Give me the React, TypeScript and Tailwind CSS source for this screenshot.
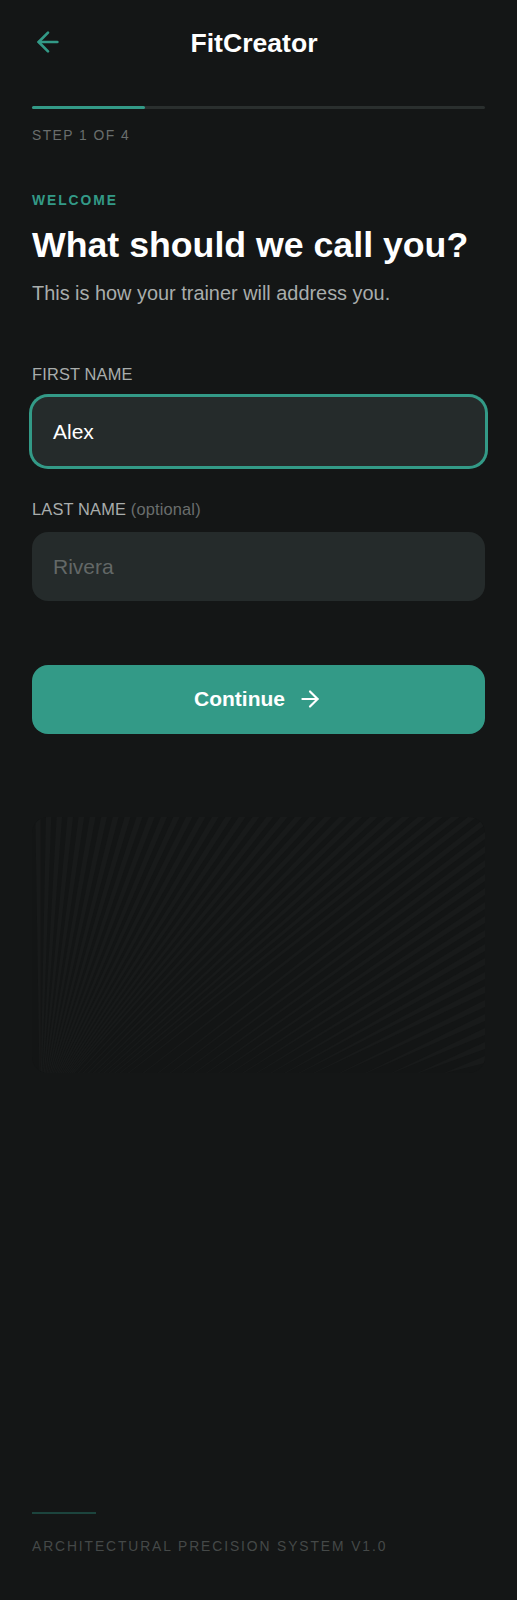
import { ArrowLeft, ArrowRight } from 'lucide-react';

const W = 453;
const H = 256;

// where a stripe lands on the bottom edge, by its position along the top and right edges
const knots: [number, number][] = [
  [6, 8],
  [268, 42],
  [418, 92],
  [558, 213],
  [625, 281],
  [695, 411],
  [709, 453],
];

function landing(s: number) {
  for (let i = 1; i < knots.length; i++) {
    const [s0, x0] = knots[i - 1];
    const [s1, x1] = knots[i];
    if (s <= s1) return x0 + ((s - s0) / (s1 - s0)) * (x1 - x0);
  }
  return W;
}

function stripes() {
  const out: string[] = [];
  let s = 6;
  while (s < W + H) {
    const step = s < W ? 10.5 + (s / W) * 7 : 14;
    const half = step * 0.25;
    const top = (v: number) => (v < W ? [v, 0] : [W, v - W]);
    const [ax, ay] = top(s - half);
    const [bx, by] = top(s + half);
    const xb = landing(s);
    out.push(`${ax},${ay} ${bx},${by} ${xb + 0.6},${H} ${xb - 0.6},${H}`);
    s += step;
  }
  return out;
}

function Field({ label, hint, value, focused }: { label: string; hint?: string; value: string; focused?: boolean }) {
  return (
    <div>
      <div className="text-[16.4px] leading-[24px] tracking-[0.01em] text-[#a9adac]">
        {label}
        {hint && <span className="text-[#6a6e6d]"> {hint}</span>}
      </div>
      <div
        className={`mt-[11px] h-[69px] rounded-[16px] bg-[#252b2b] px-[21px] flex items-center text-[21px] ${
          focused ? 'text-white ring-[3px] ring-[#339a87]' : 'text-[#636867]'
        }`}
      >
        {value}
      </div>
    </div>
  );
}

export default function App() {
  return (
    <div className="h-[1600px] bg-[#141616] px-[32px] flex flex-col font-['Liberation_Sans',Arial,sans-serif]">
      <header className="relative h-[32px] mt-[26px] flex items-center">
        <ArrowLeft size={32} strokeWidth={2} className="text-[#339a87]" />
        <h1 className="absolute left-0 right-0 top-[1px] pr-[9px] text-center text-[26.6px] leading-[32px] font-bold text-white">FitCreator</h1>
      </header>

      <div className="mt-[48px] h-[3px] rounded-full bg-[#2a2f2e]">
        <div className="h-full w-1/4 rounded-full bg-[#339a87]" />
      </div>
      <div className="mt-[16px] text-[13.85px] leading-[20px] tracking-[0.105em] text-[#6a6e6d]">STEP 1 OF 4</div>

      <div className="mt-[45px] text-[13.85px] leading-[20px] font-bold tracking-[0.14em] text-[#339a87]">WELCOME</div>
      <h2 className="mt-[12px] text-[35.7px] leading-[46px] font-bold text-white">What should we call you?</h2>
      <p className="mt-[11px] text-[19.9px] leading-[28px] text-[#a9adac]">This is how your trainer will address you.</p>

      <div className="mt-[55px] flex flex-col gap-[31px]">
        <Field label="FIRST NAME" value="Alex" focused />
        <Field label="LAST NAME" hint="(optional)" value="Rivera" />
      </div>

      <button className="mt-[64px] h-[69px] rounded-[16px] bg-[#339a87] pb-[2px] flex items-center justify-center gap-[12px] text-[21px] font-bold text-white">
        Continue
        <ArrowRight size={26} strokeWidth={2} />
      </button>

      <div className="mt-[83px] h-[256px] rounded-[16px] overflow-hidden bg-[#131515]">
        <svg width={W} height={H} viewBox={`0 0 ${W} ${H}`}>
          {stripes().map((points, i) => (
            <polygon key={i} points={points} fill="#181a1a" />
          ))}
        </svg>
      </div>

      <div className="mt-auto mb-[44px]">
        <div className="h-[2px] w-[64px] bg-[#1c443d]" />
        <div className="mt-[22px] text-[13.85px] leading-[20px] tracking-[1.9px] text-[#454948]">
          ARCHITECTURAL PRECISION SYSTEM V1.0
        </div>
      </div>
    </div>
  );
}
